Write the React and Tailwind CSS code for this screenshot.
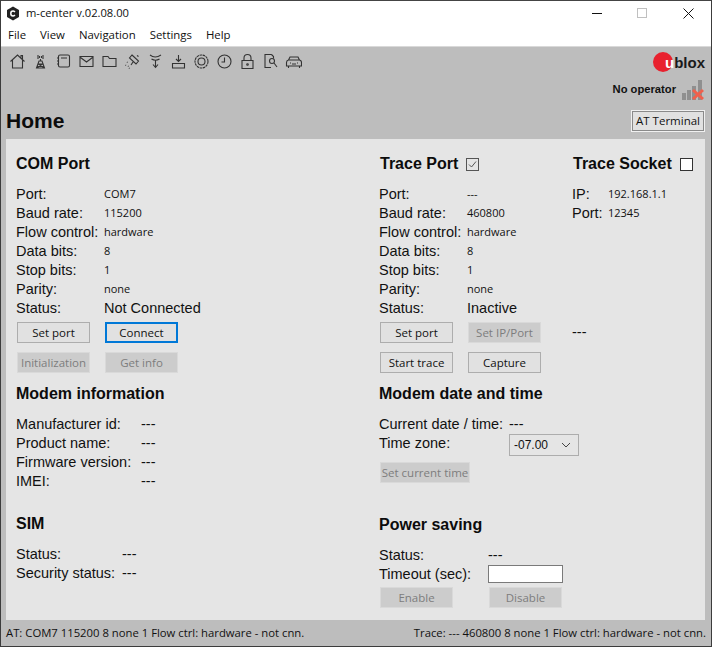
import { useState } from 'react'

const ui = "font-['Open_Sans','Noto_Sans',sans-serif]"
const arial = "font-['Liberation_Sans',sans-serif]"

const icons = [
  <path key="home" d="M1.5 8.5 8.5 2l7 6.5M3.5 7v8h10V7M12 4.500V2.500h1.500V6" />,
  <path key="tower" d="M8.500 6v2M7 8h3l2.500 7h-8zM6 11h5M4.500 15l6-4M12.500 15l-6-4M6 2v4M11 2v4M7.500 3v2M9.500 3v2" />,
  <path key="book" d="M3.500 3.500q0-1.500 1.500-1.500h8q1.500 0 1.500 1.500v9q0 1.500-1.500 1.500H5q-1.500 0-1.500-1.500zM2 5h2M2 8h2M2 11h2M6 5h6" />,
  <path key="mail" d="M2 3.500h13v10H2zM2.500 4.500 8.500 9l6-4.500" />,
  <path key="folder" d="M2 3.500h5l1.500 2H15v8H2z" />,
  <path key="dish" d="M8 2l6.500 6-2.500 3-6.500-6zM9 9l-2 3M3 9l.5.5M1.500 12l.5.5M4 13l.5.5M5 15l.5.5M13 2.500l1.500 1" />,
  <path key="recv" d="M3 2q5 4 11 0M4.500 6q4 2.500 8 0M8.500 7.500V14M6 11.500l2.500 3 2.500-3" />,
  <path key="down" d="M2.500 10.500h12v4.500h-12zM8.500 2v6M6 6l2.500 2.500L11 6" />,
  <g key="gear"><circle cx="8.500" cy="8.500" r="6.500" strokeDasharray="2.500 .6" /><circle cx="8.500" cy="8.500" r="3.500" /></g>,
  <g key="clock"><circle cx="8.500" cy="8.500" r="6.500" /><path d="M8.500 4.500v4.500H5.500" /></g>,
  <g key="lock"><path d="M3 7.500h11v8H3zM5 7.500V5q0-3.500 3.500-3.500T12 5v2.500" /><circle cx="8.500" cy="11.500" r=".8" /></g>,
  <g key="doc"><path d="M9.500 1.500H3v13h6M9.500 1.500l2 2v2" /><circle cx="10" cy="8" r="2.500" /><path d="M12 10l3 4" /></g>,
  <g key="car"><path d="M1.500 9.500q0-2 2-2.500L5 4h8l1.500 3q2 .5 2 2.500V13h-15zM3.500 13v2M14.500 13v2M4 7h10" /><path d="M5 10h1M12 10h1M7 11h4" /></g>,
]

function Toolbar() {
  return (
    <div className="flex pl-[8px] gap-[6px] pt-[6px]">
      {icons.map((icon, i) => (
        <svg key={i} width="17" height="17" viewBox="0 0 17 17" fill="none" stroke="#333" strokeWidth="1.100">
          {icon}
        </svg>
      ))}
    </div>
  )
}

function Row({ label, value, w = 'w-[88px]', big }) {
  return (
    <div className="flex items-center h-[19px] whitespace-nowrap">
      <span className={`${arial} text-[14.5px] text-[#111] ${w}`}>{label}</span>
      <span className={big ? `${arial} text-[14.5px] text-[#111]` : `${ui} text-[11px] text-[#111]`}>{value}</span>
    </div>
  )
}

function Btn({ children, disabled, focus, w = 'w-[73px]' }) {
  let cls = 'bg-[#e1e1e1] border border-[#adadad] text-[#111]'
  if (disabled) cls = 'bg-[#cccccc] border border-[#d9d9d9] text-[#7d7d7d]'
  if (focus) cls = 'bg-[#e1e1e1] border-2 border-[#0078d7] text-[#111]'
  return (
    <div className={`${ui} ${w} ${cls} h-[21px] flex items-center justify-center text-[11.500px] whitespace-nowrap`}>
      {children}
    </div>
  )
}

function Heading({ children, className = '' }) {
  return <h2 className={`${arial} font-bold text-[16px] leading-[20px] whitespace-nowrap text-[#0c0c0c] ${className}`}>{children}</h2>
}

function Logo() {
  return (
    <div className="flex items-center h-[20px]">
      <div className="w-[20px] h-[20px] rounded-full bg-[#e8212e] flex items-center justify-end">
        <span className={`${arial} font-bold text-[15px] leading-none text-white mr-[-1px] mt-[1px]`}>u</span>
      </div>
      <span className={`${arial} font-bold text-[15px] leading-none text-[#1a1a1a] ml-[1px] mt-[1px]`}>blox</span>
    </div>
  )
}

function Signal() {
  return (
    <svg width="23" height="21" viewBox="0 0 23 21">
      <rect x="0" y="14" width="4" height="7" fill="#8f8f8f" />
      <rect x="5" y="11" width="4" height="10" fill="#8f8f8f" />
      <rect x="10" y="7" width="4" height="14" fill="#8f8f8f" />
      <rect x="16" y="1" width="4" height="20" fill="#8f8f8f" />
      <path d="M11 11l10 9M21 11l-10 9" stroke="#f0604c" strokeWidth="3" />
    </svg>
  )
}

export default function App() {
  const [timeout, setTimeoutValue] = useState('')

  return (
    <div className="w-[712px] h-[647px] flex flex-col bg-[#bdbdbd] border-x border-b border-[#3c3c3c] overflow-hidden">
      <div className="h-[46px] bg-white shrink-0 border-t border-[#444]">
        <div className="flex items-center h-[24px] pl-[5px]">
          <svg width="14" height="15" viewBox="0 0 14 15" className="mr-[6px]">
            <path d="M7 .5 13 4v7l-6 3.500L1 11V4z" fill="#222" />
            <path d="M9 6q-1-1-2-1-2.200 0-2.200 2.500T7 10q1 0 2-1" fill="none" stroke="#fff" strokeWidth="1.500" />
          </svg>
          <span className={`${ui} text-[11.200px] text-[#111]`}>m-center v.02.08.00</span>
          <div className="ml-auto flex items-center pr-[17px]">
            <div className="w-[10px] border-t border-[#111] mr-[35px]" />
            <div className="w-[10px] h-[10px] border border-[#c0c0c0] mr-[36px]" />
            <svg width="11" height="11" viewBox="0 0 11 11" stroke="#111" strokeWidth="1">
              <path d="M.5.5l10 10M10.500.500l-10 10" />
            </svg>
          </div>
        </div>
        <div className={`${ui} flex gap-[14px] pl-[7px] h-[20px] items-center text-[11.400px] text-[#111]`}>
          <span>File</span>
          <span>View</span>
          <span>Navigation</span>
          <span>Settings</span>
          <span>Help</span>
        </div>
      </div>

      <div className="h-[93px] shrink-0 border-t border-[#d9d9d9] flex justify-between">
        <div className="flex flex-col">
          <Toolbar />
          <h1 className={`${arial} font-bold text-[21px] leading-[26px] text-[#0c0c0c] pl-[5px] mt-[38px]`}>Home</h1>
        </div>
        <div className="flex flex-col items-end pr-[6px] pt-[5px]">
          <Logo />
          <div className="flex items-center mt-[7px]">
            <span className={`${arial} font-bold text-[11.200px] text-[#111] mr-[6px]`}>No operator</span>
            <Signal />
          </div>
          <div className={`${ui} mt-[10px] w-[74px] h-[22px] bg-[#e1e1e1] border border-[#f0f0f0] outline outline-[#8a8a8a] -outline-offset-2 flex items-center justify-center text-[11.500px] text-[#111]`}>
            AT Terminal
          </div>
        </div>
      </div>

      <div className="ml-[5px] mr-[6px] h-[481px] shrink-0 bg-[#e5e5e5] grid grid-cols-[363px_1fr] pl-[10px]">
        <div className="flex flex-col pt-[15px]">
          <Heading>COM Port</Heading>
          <div className="mt-[11px] flex flex-col">
            <Row label="Port:" value="COM7" />
            <Row label="Baud rate:" value="115200" />
            <Row label="Flow control:" value="hardware" />
            <Row label="Data bits:" value="8" />
            <Row label="Stop bits:" value="1" />
            <Row label="Parity:" value="none" />
            <Row label="Status:" value="Not Connected" big />
          </div>
          <div className="flex gap-[15px] mt-[4px] pl-[1px]">
            <Btn>Set port</Btn>
            <Btn focus>Connect</Btn>
          </div>
          <div className="flex gap-[15px] mt-[9px] pl-[1px]">
            <Btn disabled>Initialization</Btn>
            <Btn disabled>Get info</Btn>
          </div>
          <Heading className="mt-[11px]">Modem information</Heading>
          <div className="mt-[11px] flex flex-col">
            <Row label="Manufacturer id:" value="---" w="w-[125px]" big />
            <Row label="Product name:" value="---" w="w-[125px]" big />
            <Row label="Firmware version:" value="---" w="w-[125px]" big />
            <Row label="IMEI:" value="---" w="w-[125px]" big />
          </div>
          <Heading className="mt-[23px]">SIM</Heading>
          <div className="mt-[11px] flex flex-col">
            <Row label="Status:" value="---" w="w-[106px]" big />
            <Row label="Security status:" value="---" w="w-[106px]" big />
          </div>
        </div>

        <div className="flex flex-col pt-[15px]">
          <div className="flex">
            <div className="w-[193px]">
              <div className="flex items-center">
                <Heading className="ml-[1px]">Trace Port</Heading>
                <div className="ml-[8px] w-[13px] h-[13px] border border-[#555] flex items-center justify-center">
                  <svg width="11" height="11" viewBox="0 0 11 11" fill="none" stroke="#555" strokeWidth="1">
                    <path d="M2 5.500l2.500 2.500L9 2.500" />
                  </svg>
                </div>
              </div>
              <div className="mt-[11px] flex flex-col">
                <Row label="Port:" value="---" />
                <Row label="Baud rate:" value="460800" />
                <Row label="Flow control:" value="hardware" />
                <Row label="Data bits:" value="8" />
                <Row label="Stop bits:" value="1" />
                <Row label="Parity:" value="none" />
                <Row label="Status:" value="Inactive" big />
              </div>
            </div>
            <div>
              <div className="flex items-center">
                <Heading className="ml-[1px]">Trace Socket</Heading>
                <div className="ml-[8px] w-[13px] h-[13px] border border-[#333] bg-white" />
              </div>
              <div className="mt-[11px] flex flex-col">
                <Row label="IP:" value="192.168.1.1" w="w-[36px]" />
                <Row label="Port:" value="12345" w="w-[36px]" />
              </div>
            </div>
          </div>
          <div className="flex mt-[4px] pl-[1px] h-[21px]">
            <Btn>Set port</Btn>
            <div className="ml-[15px]">
              <Btn disabled>Set IP/Port</Btn>
            </div>
            <span className={`${arial} text-[14.5px] leading-[21px] text-[#111] ml-[31px]`}>---</span>
          </div>
          <div className="flex gap-[15px] mt-[9px] pl-[1px]">
            <Btn>Start trace</Btn>
            <Btn>Capture</Btn>
          </div>
          <Heading className="mt-[11px]">Modem date and time</Heading>
          <div className="mt-[11px] flex flex-col">
            <Row label="Current date / time:" value="---" w="w-[130px]" big />
            <div className="flex items-start h-[19px]">
              <span className={`${arial} text-[14.5px] leading-[19px] text-[#111] w-[130px]`}>Time zone:</span>
              <div className={`${arial} w-[70px] h-[22px] shrink-0 bg-[#e5e5e5] border border-[#adadad] flex items-center justify-between pl-[4px] pr-[7px] text-[12px] text-[#111]`}>
                -07.00
                <svg width="10" height="6" viewBox="0 0 10 6" fill="none" stroke="#444">
                  <path d="M1 1l4 4 4-4" />
                </svg>
              </div>
            </div>
          </div>
          <div className="mt-[9px] pl-[1px]">
            <Btn disabled w="w-[90px]">Set current time</Btn>
          </div>
          <Heading className="mt-[32px]">Power saving</Heading>
          <div className="mt-[11px] flex flex-col">
            <Row label="Status:" value="---" w="w-[109px]" big />
            <div className="flex items-center h-[19px]">
              <span className={`${arial} text-[14.5px] text-[#111] w-[109px]`}>Timeout (sec):</span>
              <input
                value={timeout}
                onChange={(e) => setTimeoutValue(e.target.value)}
                className="w-[75px] h-[18px] mb-[2px] bg-white border border-[#7a7a7a] outline-none"
                type="text"
              />
            </div>
          </div>
          <div className="flex gap-[36px] mt-[3px] pl-[1px]">
            <Btn disabled>Enable</Btn>
            <Btn disabled>Disable</Btn>
          </div>
        </div>
      </div>

      <div className={`${ui} flex-1 flex items-center justify-between pl-[5px] pr-[5px] text-[11.300px] text-[#111] whitespace-nowrap`}>
        <span>AT: COM7 115200 8 none 1 Flow ctrl: hardware - not cnn.</span>
        <span>Trace: --- 460800 8 none 1 Flow ctrl: hardware - not cnn.</span>
      </div>
    </div>
  )
}
